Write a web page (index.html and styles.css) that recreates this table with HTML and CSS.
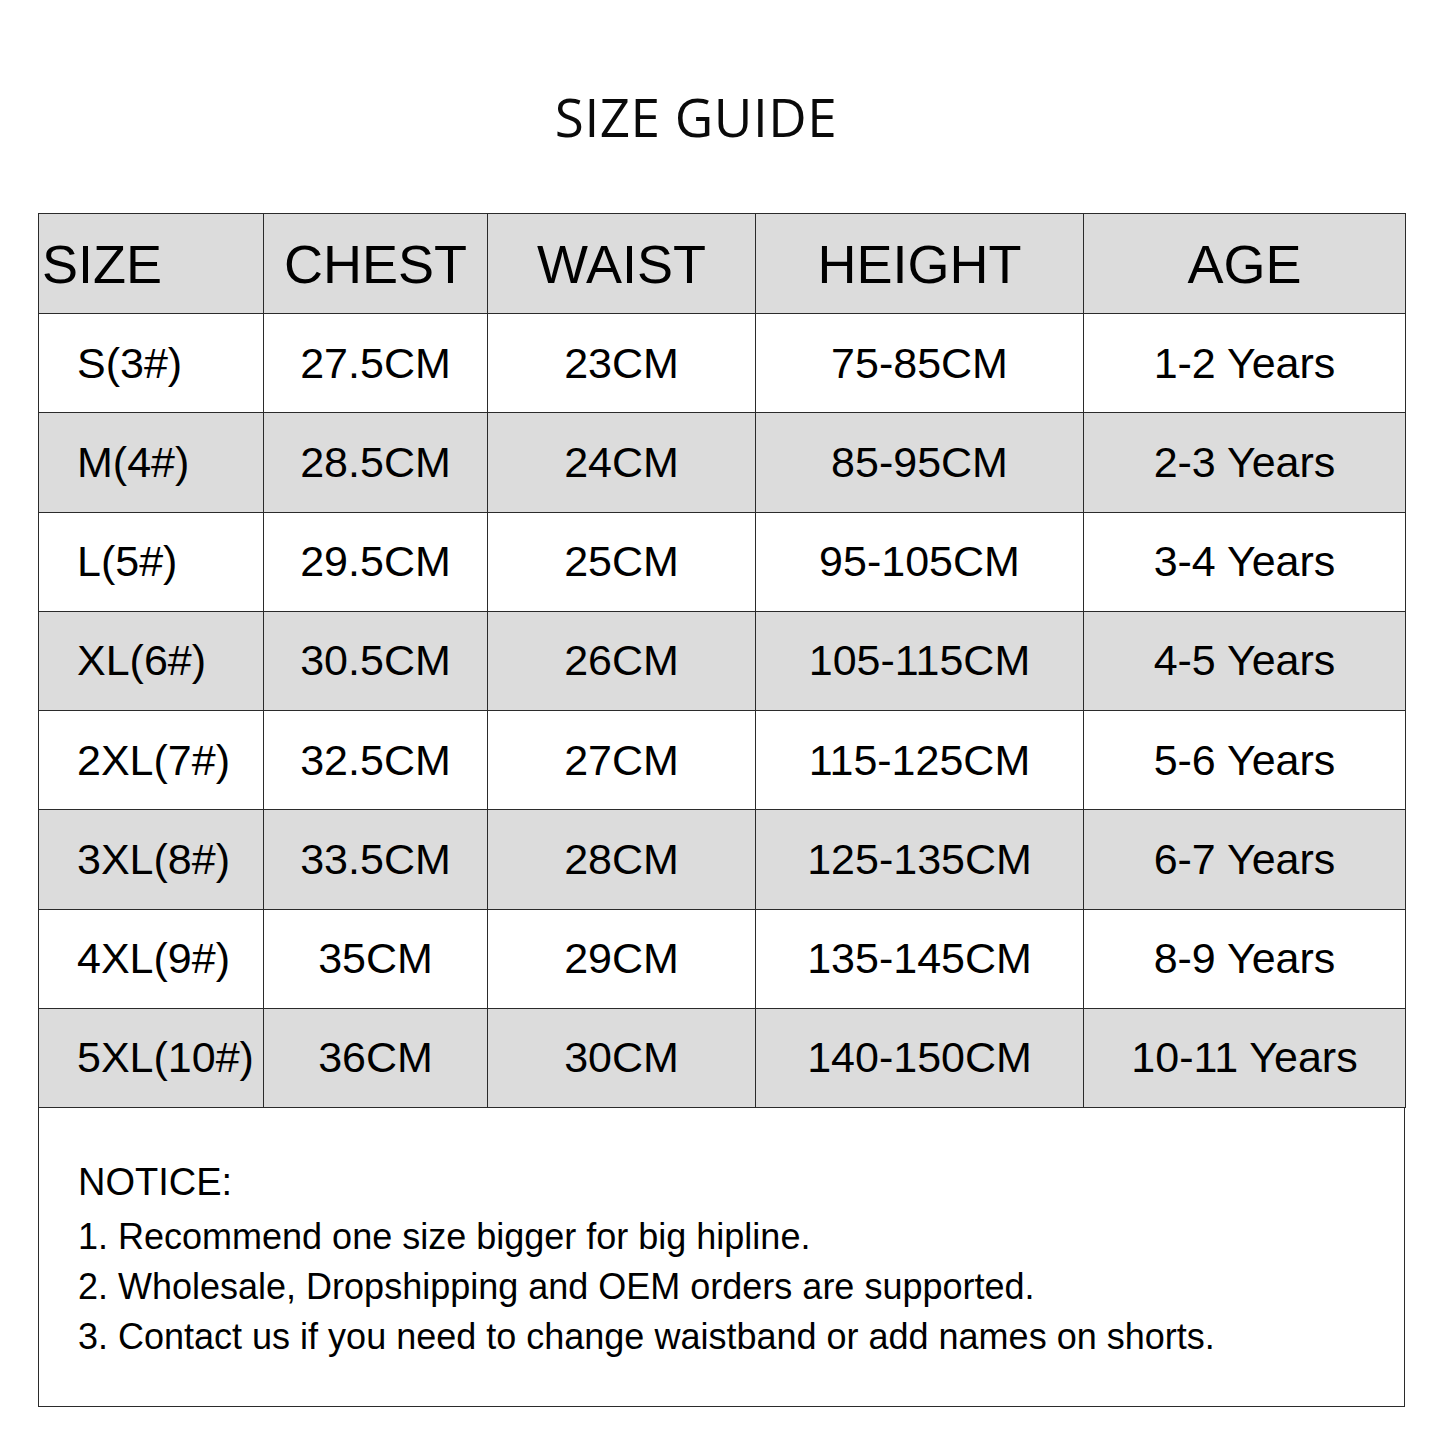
FILE: index.html
```html
<!DOCTYPE html>
<html>
<head>
<meta charset="utf-8">
<link rel="stylesheet" href="styles.css">
</head>
<body>
<div class="page">
  <h1 class="title">SIZE GUIDE</h1>
  <table class="sizes">
    <colgroup>
      <col class="c1"><col class="c2"><col class="c3"><col class="c4"><col class="c5">
    </colgroup>
    <thead>
      <tr class="head">
        <th class="first">SIZE</th><th>CHEST</th><th>WAIST</th><th>HEIGHT</th><th>AGE</th>
      </tr>
    </thead>
    <tbody>
      <tr><td class="first">S(3#)</td><td>27.5CM</td><td>23CM</td><td>75-85CM</td><td>1-2 Years</td></tr>
      <tr class="alt"><td class="first">M(4#)</td><td>28.5CM</td><td>24CM</td><td>85-95CM</td><td>2-3 Years</td></tr>
      <tr><td class="first">L(5#)</td><td>29.5CM</td><td>25CM</td><td>95-105CM</td><td>3-4 Years</td></tr>
      <tr class="alt"><td class="first">XL(6#)</td><td>30.5CM</td><td>26CM</td><td>105-115CM</td><td>4-5 Years</td></tr>
      <tr><td class="first">2XL(7#)</td><td>32.5CM</td><td>27CM</td><td>115-125CM</td><td>5-6 Years</td></tr>
      <tr class="alt"><td class="first">3XL(8#)</td><td>33.5CM</td><td>28CM</td><td>125-135CM</td><td>6-7 Years</td></tr>
      <tr><td class="first">4XL(9#)</td><td>35CM</td><td>29CM</td><td>135-145CM</td><td>8-9 Years</td></tr>
      <tr class="alt"><td class="first">5XL(10#)</td><td>36CM</td><td>30CM</td><td>140-150CM</td><td>10-11 Years</td></tr>
    </tbody>
  </table>
  <div class="notice">
    <p class="notice-title">NOTICE:</p>
    <p>1. Recommend one size bigger for big hipline.</p>
    <p>2. Wholesale, Dropshipping and OEM orders are supported.</p>
    <p>3. Contact us if you need to change waistband or add names on shorts.</p>
  </div>
</div>
</body>
</html>
```
FILE: styles.css
```css
html, body {
  margin: 0;
  padding: 0;
  background: #ffffff;
}
.page {
  width: 1445px;
  height: 1445px;
  padding: 87px 0 0 38px;
  box-sizing: border-box;
  font-family: "Liberation Sans", Arial, sans-serif;
  color: #000;
}
.title {
  margin: 0 0 66px 0;
  width: 1316px;
  text-align: center;
  font-family: "Open Sans", sans-serif;
  font-weight: 400;
  font-size: 53px;
  line-height: 60px;
  letter-spacing: 0.5px;
  color: #0a0a0a;
}
.sizes {
  width: 1367px;
  border-collapse: collapse;
  table-layout: fixed;
}
.c1 { width: 225px; }
.c2 { width: 224px; }
.c3 { width: 268px; }
.c4 { width: 328px; }
.c5 { width: 322px; }
.sizes th, .sizes td {
  border: 1.5px solid #2b2b2b;
  text-align: center;
  padding: 0;
  white-space: nowrap;
  overflow: visible;
}
.sizes th {
  height: 99px;
  font-weight: 400;
  font-size: 54px;
  background: #dcdcdc;
}
.sizes td {
  height: 98.25px;
  font-size: 43px;
}
.sizes th.first {
  text-align: left;
  padding-left: 3px;
}
.sizes td.first {
  text-align: left;
  padding-left: 38px;
}
.sizes tr.alt td {
  background: #dcdcdc;
}
.notice {
  width: 1367px;
  height: 299px;
  box-sizing: border-box;
  border: 1.5px solid #2b2b2b;
  border-top: none;
  padding: 49px 0 0 39px;
  font-size: 36px;
  line-height: 50px;
}
.notice p {
  margin: 0;
}
.notice .notice-title {
  font-size: 38px;
  margin-bottom: 5px;
}
```
